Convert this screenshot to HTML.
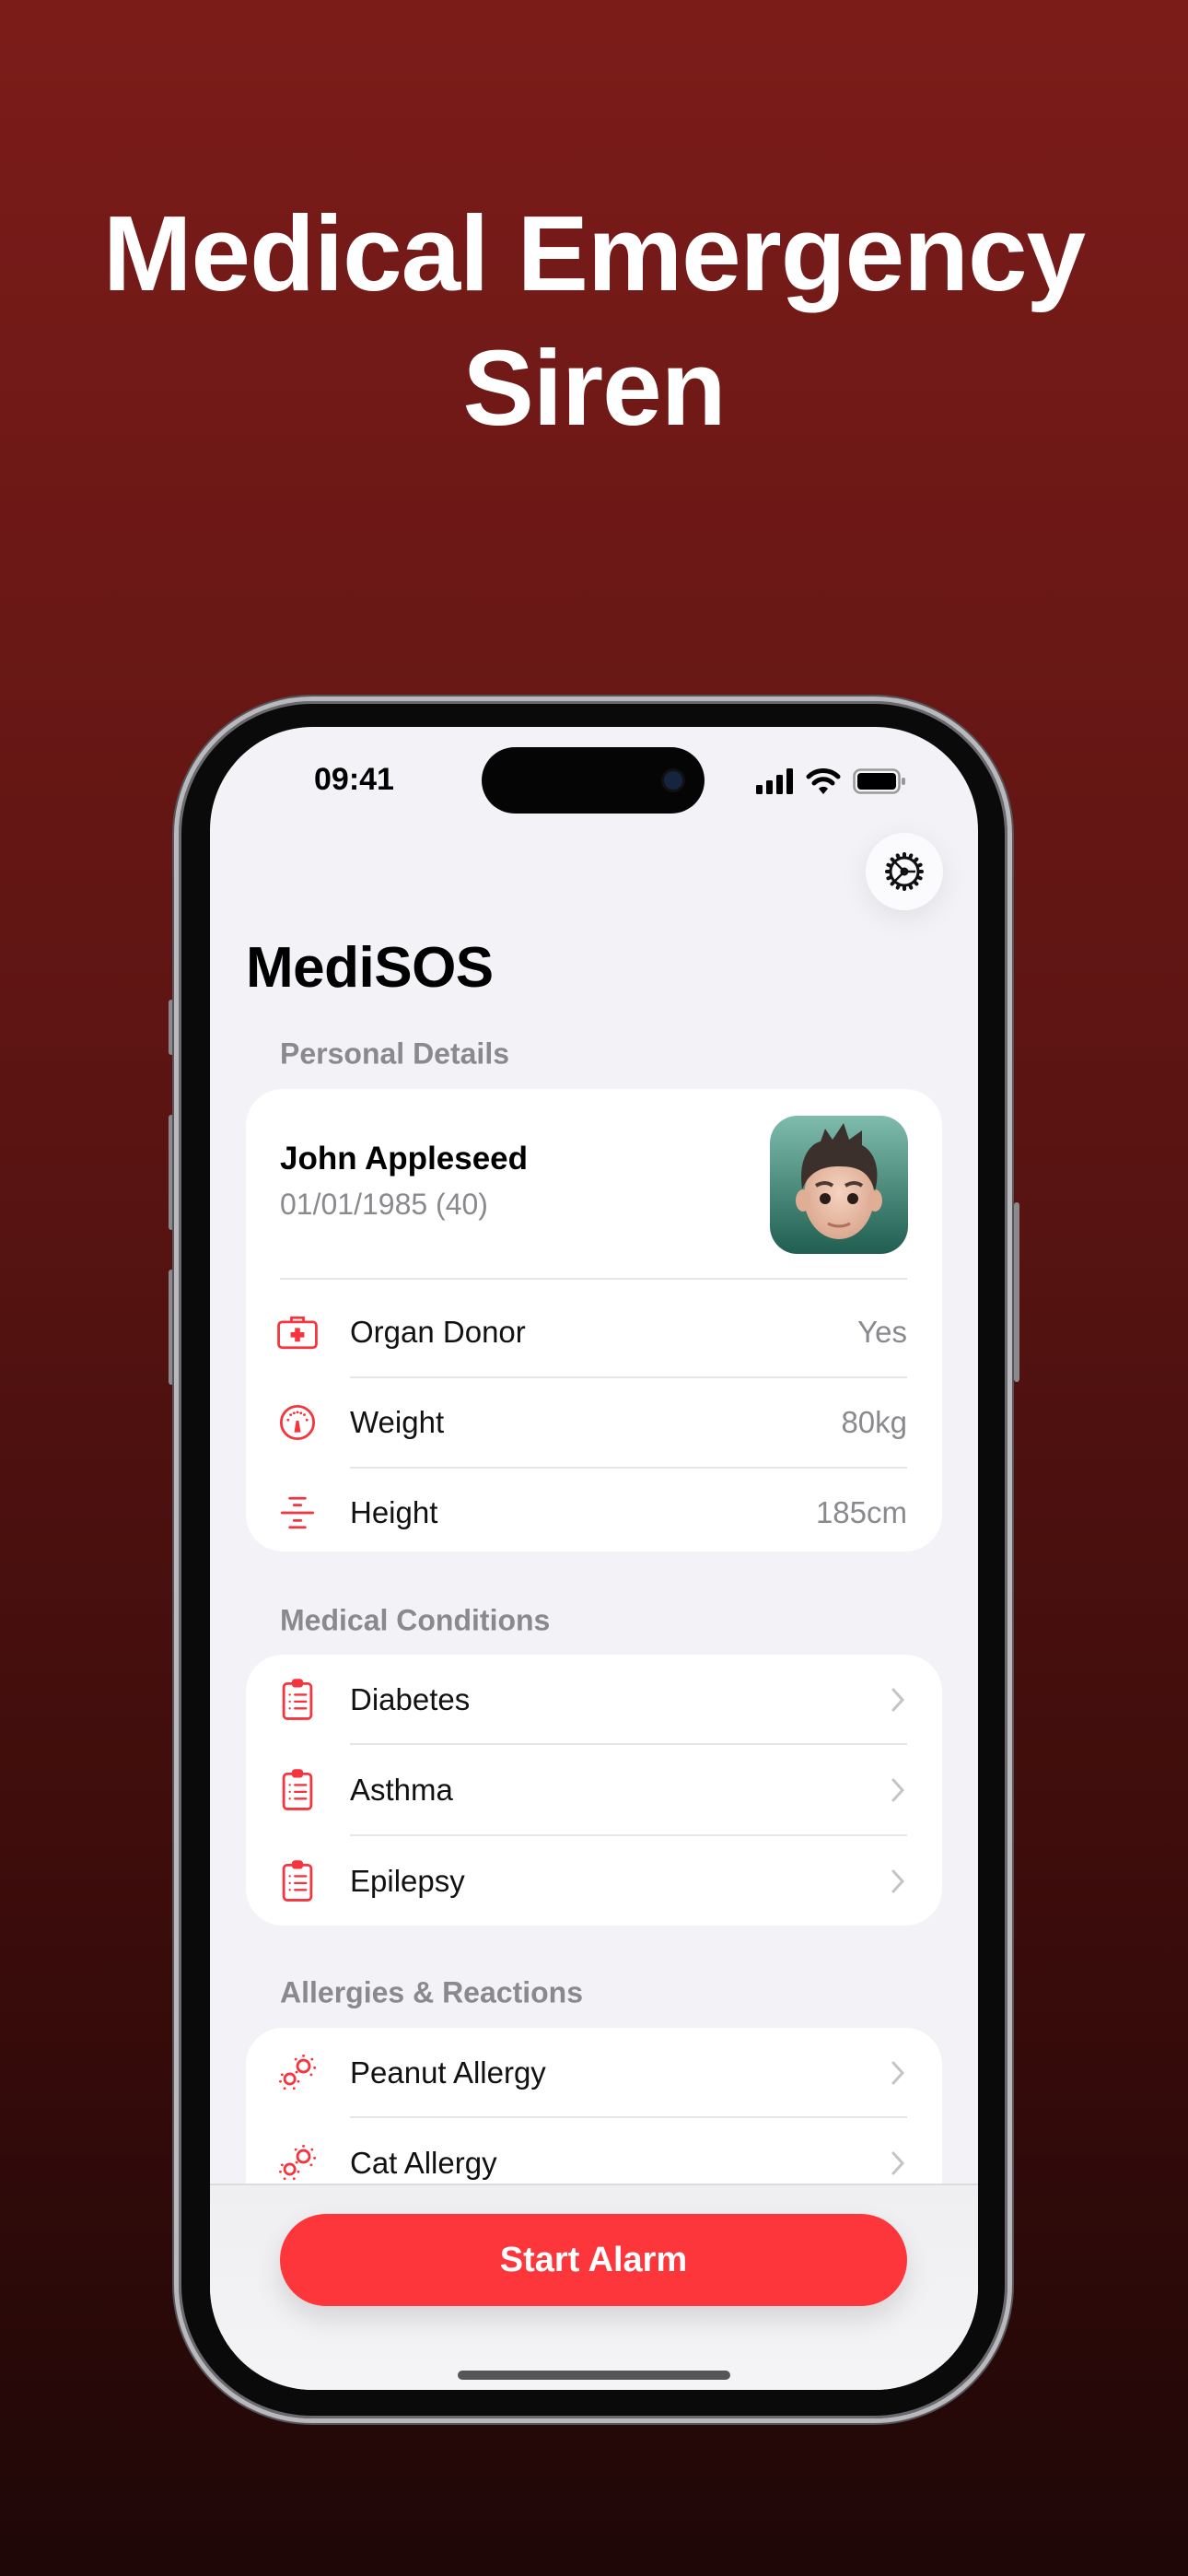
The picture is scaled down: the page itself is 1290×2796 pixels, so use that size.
<!DOCTYPE html>
<html><head><meta charset="utf-8">
<style>
*{margin:0;padding:0;box-sizing:border-box}
html,body{width:1290px;height:2796px;overflow:hidden}
body{background:linear-gradient(180deg,#7c1c19 0%,#5e1513 40%,#3a0c0b 75%,#1f0707 100%);font-family:"Liberation Sans",sans-serif;position:relative}
.abs{position:absolute}
.title{left:0;width:1290px;text-align:center;color:#fff;font-weight:bold;font-size:116px;letter-spacing:-1px}
.phone{left:189px;top:756px;width:910px;height:1874px;border-radius:150px;background:#0a0a0a;border:5px solid #b9b9bd;box-shadow:0 0 0 2px #55555a, inset 0 0 0 3px #6a6a6e}
.screen{left:228px;top:789px;width:834px;height:1805px;border-radius:112px;background:#f2f2f7;overflow:hidden}
.card{position:absolute;left:39px;width:756px;background:#fff;border-radius:40px}
.hdr{position:absolute;left:76px;color:#8a8a8e;font-size:32px;font-weight:bold;transform:translateY(-50%)}
.row{position:absolute;left:0;width:756px;height:98px}
.row .lbl{position:absolute;left:113px;top:50%;transform:translateY(-50%);font-size:33px;color:#111}
.row .val{position:absolute;right:38px;top:50%;transform:translateY(-50%);font-size:33px;color:#8a8a8e}
.row .ic{position:absolute;left:30px;top:50%;transform:translateY(-50%);width:52px;height:52px}
.row .chev{position:absolute;right:40px;top:50%;transform:translateY(-50%);width:16px;height:28px}
.div{position:absolute;left:113px;right:38px;height:2px;background:#e6e6ea}
.side{position:absolute;background:#8a8a8e;width:6px;border-radius:3px}
</style></head><body>
<div class="abs title" style="top:208px;">Medical Emergency</div>
<div class="abs title" style="top:354px;">Siren</div>

<div class="side" style="left:183px;top:1085px;height:60px"></div>
<div class="side" style="left:183px;top:1210px;height:125px"></div>
<div class="side" style="left:183px;top:1378px;height:125px"></div>
<div class="side" style="left:1101px;top:1305px;height:195px"></div>

<div class="abs phone"></div>
<div class="abs screen">
  <div class="abs" style="left:113px;top:38px;font-size:34px;font-weight:bold;color:#000">09:41</div>
  <div class="abs" style="left:295px;top:22px;width:242px;height:72px;border-radius:36px;background:#050505"></div>
  <div class="abs" style="left:493px;top:48px;width:20px;height:20px;border-radius:50%;background:#15243f;box-shadow:0 0 0 3px #111"></div>
  <svg class="abs" style="left:593px;top:45px" width="40" height="28" viewBox="0 0 40 28"><rect x="0" y="18" width="7" height="10" rx="1.5"/><rect x="11" y="13" width="7" height="15" rx="1.5"/><rect x="22" y="7" width="7" height="21" rx="1.5"/><rect x="33" y="0" width="7" height="28" rx="1.5"/></svg>
  <svg class="abs" style="left:647px;top:44px" width="38" height="30" viewBox="0 0 38 30"><path d="M3 10 A23 23 0 0 1 35 10" stroke="#000" stroke-width="5" fill="none" stroke-linecap="round"/><path d="M9 17 A14 14 0 0 1 29 17" stroke="#000" stroke-width="5" fill="none" stroke-linecap="round"/><path d="M14 23 L19 29 L24 23 A7 7 0 0 0 14 23Z"/></svg>
  <svg class="abs" style="left:698px;top:45px" width="58" height="28" viewBox="0 0 58 28"><rect x="1.5" y="1.5" width="49" height="25" rx="7" fill="none" stroke="#999" stroke-width="2.5"/><rect x="5" y="5" width="42" height="18" rx="4"/><rect x="53" y="10" width="4" height="8" rx="2" fill="#999"/></svg>

  <div class="abs" style="left:712px;top:115px;width:84px;height:84px;border-radius:50%;background:#fbfbfd;box-shadow:0 8px 30px rgba(0,0,0,0.08)"></div>
  <svg class="abs" style="left:732px;top:135px" width="44" height="44" viewBox="0 0 44 44" fill="none" stroke="#111" stroke-width="3">
    <circle cx="22" cy="22" r="15"/>
    <g stroke-width="4" stroke-linecap="round"><path d="M22 3v3M22 38v3M3 22h3M38 22h3M8.6 8.6l2.1 2.1M33.3 33.3l2.1 2.1M8.6 35.4l2.1-2.1M33.3 10.7l2.1-2.1M14.7 4.4l1.2 2.8M28.1 36.8l1.2 2.8M4.4 29.3l2.8-1.2M36.8 15.9l2.8-1.2M4.4 14.7l2.8 1.2M36.8 28.1l2.8 1.2M14.7 39.6l1.2-2.8M28.1 7.2l1.2-2.8"/></g>
    <circle cx="22" cy="22" r="3"/><path d="M22 22L12 12M22 22L34 22M22 22L12 32" stroke-width="2.5"/>
  </svg>

  <div class="abs" style="left:39px;top:226px;font-size:62px;font-weight:bold;color:#000;letter-spacing:-0.5px">MediSOS</div>

  <div class="hdr" style="top:355px">Personal Details</div>
  <div class="card" style="top:393px;height:502px">
    <div class="abs" style="left:37px;top:56px;font-size:35px;font-weight:bold;color:#000">John Appleseed</div>
    <div class="abs" style="left:37px;top:107px;font-size:32px;color:#8a8a8e">01/01/1985 (40)</div>
    <svg class="abs" style="left:569px;top:29px" width="150" height="150" viewBox="0 0 150 150">
      <defs><linearGradient id="ag" x1="0" y1="0" x2="0" y2="1"><stop offset="0" stop-color="#7fbcae"/><stop offset="1" stop-color="#1f5e50"/></linearGradient>
      <radialGradient id="sk" cx="0.5" cy="0.45" r="0.6"><stop offset="0" stop-color="#f6d2c0"/><stop offset="1" stop-color="#d9a58c"/></radialGradient></defs>
      <rect width="150" height="150" rx="30" fill="url(#ag)"/>
      <ellipse cx="75" cy="88" rx="38" ry="46" fill="url(#sk)"/>
      <ellipse cx="36" cy="92" rx="8" ry="12" fill="#e0ad95"/><ellipse cx="114" cy="92" rx="8" ry="12" fill="#e0ad95"/>
      <path d="M35 80 C30 45 45 30 55 28 L60 14 L68 26 L80 8 L86 26 L100 16 L100 32 C115 40 120 60 114 82 C108 62 98 55 75 55 C55 55 42 62 35 80Z" fill="#3b302c"/>
      <circle cx="60" cy="90" r="6" fill="#2a1c18"/><circle cx="90" cy="90" r="6" fill="#2a1c18"/>
      <path d="M50 76 q10-6 18 0M82 76 q10-6 18 0" stroke="#4a3a33" stroke-width="4" fill="none"/>
      <path d="M63 117 q12 6 24 0" stroke="#b0705a" stroke-width="3" fill="none"/>
    </svg>
    <div class="div" style="left:37px;top:205px"></div>
    <div class="row" style="top:215px">
      <svg class="ic" viewBox="0 0 56 56" fill="none" stroke="#f5343d" stroke-width="3"><rect x="6" y="16" width="44" height="30" rx="4"/><path d="M21 16v-5h14v5"/><path d="M28 23v16M20 31h16" stroke-width="6"/></svg>
      <div class="lbl">Organ Donor</div><div class="val">Yes</div>
    </div>
    <div class="div" style="top:312px"></div>
    <div class="row" style="top:313px">
      <svg class="ic" viewBox="0 0 56 56" fill="none" stroke="#f5343d" stroke-width="3"><circle cx="28" cy="28" r="19"/><path d="M28 26l-2 12h4z" fill="#f5343d"/><g stroke-width="3" stroke-linecap="round"><path d="M17 25h.1M20 19h.1M28 16h.1M36 19h.1M39 25h.1M24 17h.1M32 17h.1"/></g></svg>
      <div class="lbl">Weight</div><div class="val">80kg</div>
    </div>
    <div class="div" style="top:410px"></div>
    <div class="row" style="top:411px">
      <svg class="ic" viewBox="0 0 56 56" fill="none" stroke="#f5343d" stroke-width="3" stroke-linecap="round"><path d="M19 11h18M24 19h8M10 28h36M24 37h8M19 45h18"/></svg>
      <div class="lbl">Height</div><div class="val">185cm</div>
    </div>
  </div>

  <div class="hdr" style="top:970px">Medical Conditions</div>
  <div class="card" style="top:1007px;height:294px">
    <div class="row" style="top:0px">
      <svg class="ic" viewBox="0 0 56 56" fill="none" stroke="#f5343d" stroke-width="3"><rect x="12" y="9" width="32" height="41" rx="4"/><rect x="23" y="5" width="10" height="7" rx="2" fill="#f5343d"/><g stroke-width="2.5" stroke-linecap="round"><path d="M19 22h.1M19 30h.1M19 38h.1M25 22h13M25 30h13M25 38h13"/></g></svg>
      <div class="lbl">Diabetes</div><svg class="chev" viewBox="0 0 16 28"><path d="M3 3l10 11-10 11" fill="none" stroke="#c4c4c7" stroke-width="3" stroke-linecap="round"/></svg>
    </div>
    <div class="div" style="top:96px"></div>
    <div class="row" style="top:98px">
      <svg class="ic" viewBox="0 0 56 56" fill="none" stroke="#f5343d" stroke-width="3"><rect x="12" y="9" width="32" height="41" rx="4"/><rect x="23" y="5" width="10" height="7" rx="2" fill="#f5343d"/><g stroke-width="2.5" stroke-linecap="round"><path d="M19 22h.1M19 30h.1M19 38h.1M25 22h13M25 30h13M25 38h13"/></g></svg>
      <div class="lbl">Asthma</div><svg class="chev" viewBox="0 0 16 28"><path d="M3 3l10 11-10 11" fill="none" stroke="#c4c4c7" stroke-width="3" stroke-linecap="round"/></svg>
    </div>
    <div class="div" style="top:195px"></div>
    <div class="row" style="top:197px">
      <svg class="ic" viewBox="0 0 56 56" fill="none" stroke="#f5343d" stroke-width="3"><rect x="12" y="9" width="32" height="41" rx="4"/><rect x="23" y="5" width="10" height="7" rx="2" fill="#f5343d"/><g stroke-width="2.5" stroke-linecap="round"><path d="M19 22h.1M19 30h.1M19 38h.1M25 22h13M25 30h13M25 38h13"/></g></svg>
      <div class="lbl">Epilepsy</div><svg class="chev" viewBox="0 0 16 28"><path d="M3 3l10 11-10 11" fill="none" stroke="#c4c4c7" stroke-width="3" stroke-linecap="round"/></svg>
    </div>
  </div>

  <div class="hdr" style="top:1374px">Allergies &amp; Reactions</div>
  <div class="card" style="top:1412px;height:260px">
    <div class="row" style="top:0px">
      <svg class="ic" viewBox="0 0 56 56" fill="none" stroke="#f5343d" stroke-width="3"><circle cx="35" cy="20" r="7"/><circle cx="19" cy="35" r="6"/><g stroke-width="3" stroke-linecap="round"><path d="M35 8h.1M45 12h.1M48 22h.1M44 30h.1M26 12h.1M10 30h.1M8 38h.1M13 46h.1M24 46h.1M29 38h.1M27 27h.1"/></g></svg>
      <div class="lbl">Peanut Allergy</div><svg class="chev" viewBox="0 0 16 28"><path d="M3 3l10 11-10 11" fill="none" stroke="#c4c4c7" stroke-width="3" stroke-linecap="round"/></svg>
    </div>
    <div class="div" style="top:96px"></div>
    <div class="row" style="top:98px">
      <svg class="ic" viewBox="0 0 56 56" fill="none" stroke="#f5343d" stroke-width="3"><circle cx="35" cy="20" r="7"/><circle cx="19" cy="35" r="6"/><g stroke-width="3" stroke-linecap="round"><path d="M35 8h.1M45 12h.1M48 22h.1M44 30h.1M26 12h.1M10 30h.1M8 38h.1M13 46h.1M24 46h.1M29 38h.1M27 27h.1"/></g></svg>
      <div class="lbl">Cat Allergy</div><svg class="chev" viewBox="0 0 16 28"><path d="M3 3l10 11-10 11" fill="none" stroke="#c4c4c7" stroke-width="3" stroke-linecap="round"/></svg>
    </div>
  </div>

  <div class="abs" style="left:0;top:1581px;width:834px;height:224px;background:linear-gradient(180deg,#efeff2,#f4f4f6);border-top:2px solid #dcdce0"></div>
  <div class="abs" style="left:76px;top:1614px;width:681px;height:100px;border-radius:50px;background:#fd363b;box-shadow:0 14px 30px rgba(0,0,0,0.12);color:#fff;font-size:38px;font-weight:bold;text-align:center;line-height:100px">Start Alarm</div>
  <div class="abs" style="left:269px;top:1784px;width:296px;height:10px;border-radius:5px;background:#555"></div>
</div>
</body></html>
